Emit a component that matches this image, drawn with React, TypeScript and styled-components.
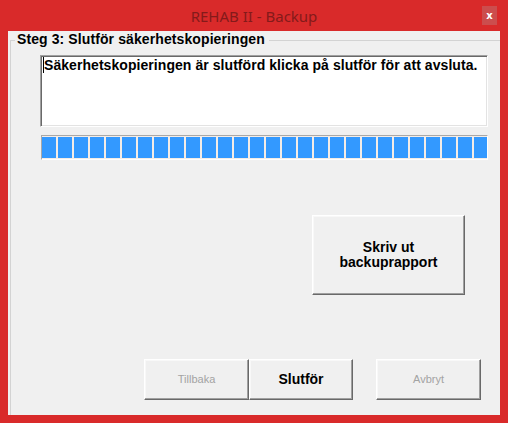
import React from "react";
import styled, { createGlobalStyle } from "styled-components";

const Global = createGlobalStyle`
  html, body { margin: 0; padding: 0; background: #d92a2a; }
  * { box-sizing: border-box; }
`;

const Window = styled.div`
  width: 508px;
  height: 423px;
  background: #d92a2a;
  display: flex;
  flex-direction: column;
  font-family: "Liberation Sans", Arial, sans-serif;
`;

const TitleBar = styled.div`
  height: 31px;
  flex-shrink: 0;
  display: grid;
  grid-template-columns: 1fr auto 1fr;
  align-items: center;
  padding: 0 11px 0 11px;
`;

const Title = styled.div`
  grid-column: 2;
  font-family: "Noto Sans", "Open Sans", sans-serif;
  font-size: 15px;
  color: #841a1a;
  padding-top: 1px;
`;

const CloseButton = styled.div`
  grid-column: 3;
  justify-self: end;
  align-self: start;
  margin-top: 6px;
  width: 15px;
  height: 19px;
  background: #cc4d4d;
  color: #ffffff;
  font-family: "DejaVu Sans", sans-serif;
  font-weight: bold;
  font-size: 10px;
  line-height: 19px;
  text-align: center;
`;

const Client = styled.div`
  flex: 1;
  margin: 0 8px 8px 8px;
  background: #f0f0f0;
  display: flex;
  flex-direction: column;
  overflow: hidden;
`;

const GroupBox = styled.fieldset`
  flex: 1;
  margin: 0 0 0 2px;
  padding: 0 0 0 4px;
  border: none;
  border-top: 1px solid #d3d3d3;
  border-left: 1px solid #d3d3d3;
  display: flex;
  flex-direction: column;
  align-items: flex-start;
  min-width: 0;
`;

const Legend = styled.legend`
  font-size: 14px;
  font-weight: bold;
  line-height: 16px;
  letter-spacing: 0.1px;
  padding: 0 4px 3px 2px;
  color: #000;
`;

const TextBox = styled.div`
  margin: 5px 0 0 25px;
  width: 448px;
  height: 72px;
  background: #ffffff;
  border: 1px solid;
  border-color: #a0a0a0 #ffffff #ffffff #a0a0a0;
  box-shadow: inset 1px 1px 0 #696969, inset -1px -1px 0 #e3e3e3;
  padding: 1px 2px;
  font-size: 14px;
  font-weight: bold;
  line-height: 16px;
  letter-spacing: 0.06px;
  color: #000;
  white-space: nowrap;
`;

const Caret = styled.span`
  display: inline-block;
  width: 1px;
  height: 16px;
  background: #000;
  vertical-align: top;
`;

const Progress = styled.div`
  margin: 8px 0 0 26px;
  width: 447px;
  height: 25px;
  border: 1px solid;
  border-color: #a8a8a8 #ffffff #ffffff #a8a8a8;
  background: #f4ece6;
  padding: 1px 1px 1px 0;
  display: flex;
  gap: 2px;
  overflow: hidden;
`;

const Block = styled.div`
  flex-shrink: 0;
  width: 14px;
  height: 21px;
  background: #3399ff;
`;

const Button = styled.button<{ $w: number; $h: number; $disabled?: boolean }>`
  width: ${(p) => p.$w}px;
  height: ${(p) => p.$h}px;
  margin: 0;
  padding: 0;
  background: #f0f0f0;
  border: 1px solid;
  border-color: #ffffff #696969 #696969 #ffffff;
  box-shadow: inset -1px -1px 0 #a0a0a0, inset 1px 1px 0 #f8f8f8;
  font-family: "Liberation Sans", Arial, sans-serif;
  font-size: ${(p) => (p.$disabled ? "11px" : "14px")};
  font-weight: ${(p) => (p.$disabled ? "normal" : "bold")};
  color: ${(p) => (p.$disabled ? "#a3a3a3" : "#000")};
  line-height: 15px;
  text-align: center;
`;

const PrintButton = styled(Button)`
  margin: 55px 0 0 297px;
`;

const ButtonRow = styled.div`
  margin: 64px 0 0 129px;
  display: flex;
`;

const Spacer = styled.div`
  width: 23px;
`;

export default function App() {
  const blocks = Array.from({ length: 28 });
  return (
    <>
      <Global />
      <Window>
        <TitleBar>
          <Title>REHAB II - Backup</Title>
          <CloseButton>x</CloseButton>
        </TitleBar>
        <Client>
          <GroupBox>
            <Legend>Steg 3: Slutför säkerhetskopieringen</Legend>
            <TextBox>
              <Caret />
              Säkerhetskopieringen är slutförd klicka på slutför för att avsluta.
            </TextBox>
            <Progress>
              {blocks.map((_, i) => (
                <Block key={i} />
              ))}
            </Progress>
            <PrintButton $w={153} $h={80}>
              Skriv ut
              <br />
              backuprapport
            </PrintButton>
            <ButtonRow>
              <Button $w={105} $h={41} $disabled>
                Tillbaka
              </Button>
              <Button $w={104} $h={41}>
                Slutför
              </Button>
              <Spacer />
              <Button $w={105} $h={41} $disabled>
                Avbryt
              </Button>
            </ButtonRow>
          </GroupBox>
        </Client>
      </Window>
    </>
  );
}
